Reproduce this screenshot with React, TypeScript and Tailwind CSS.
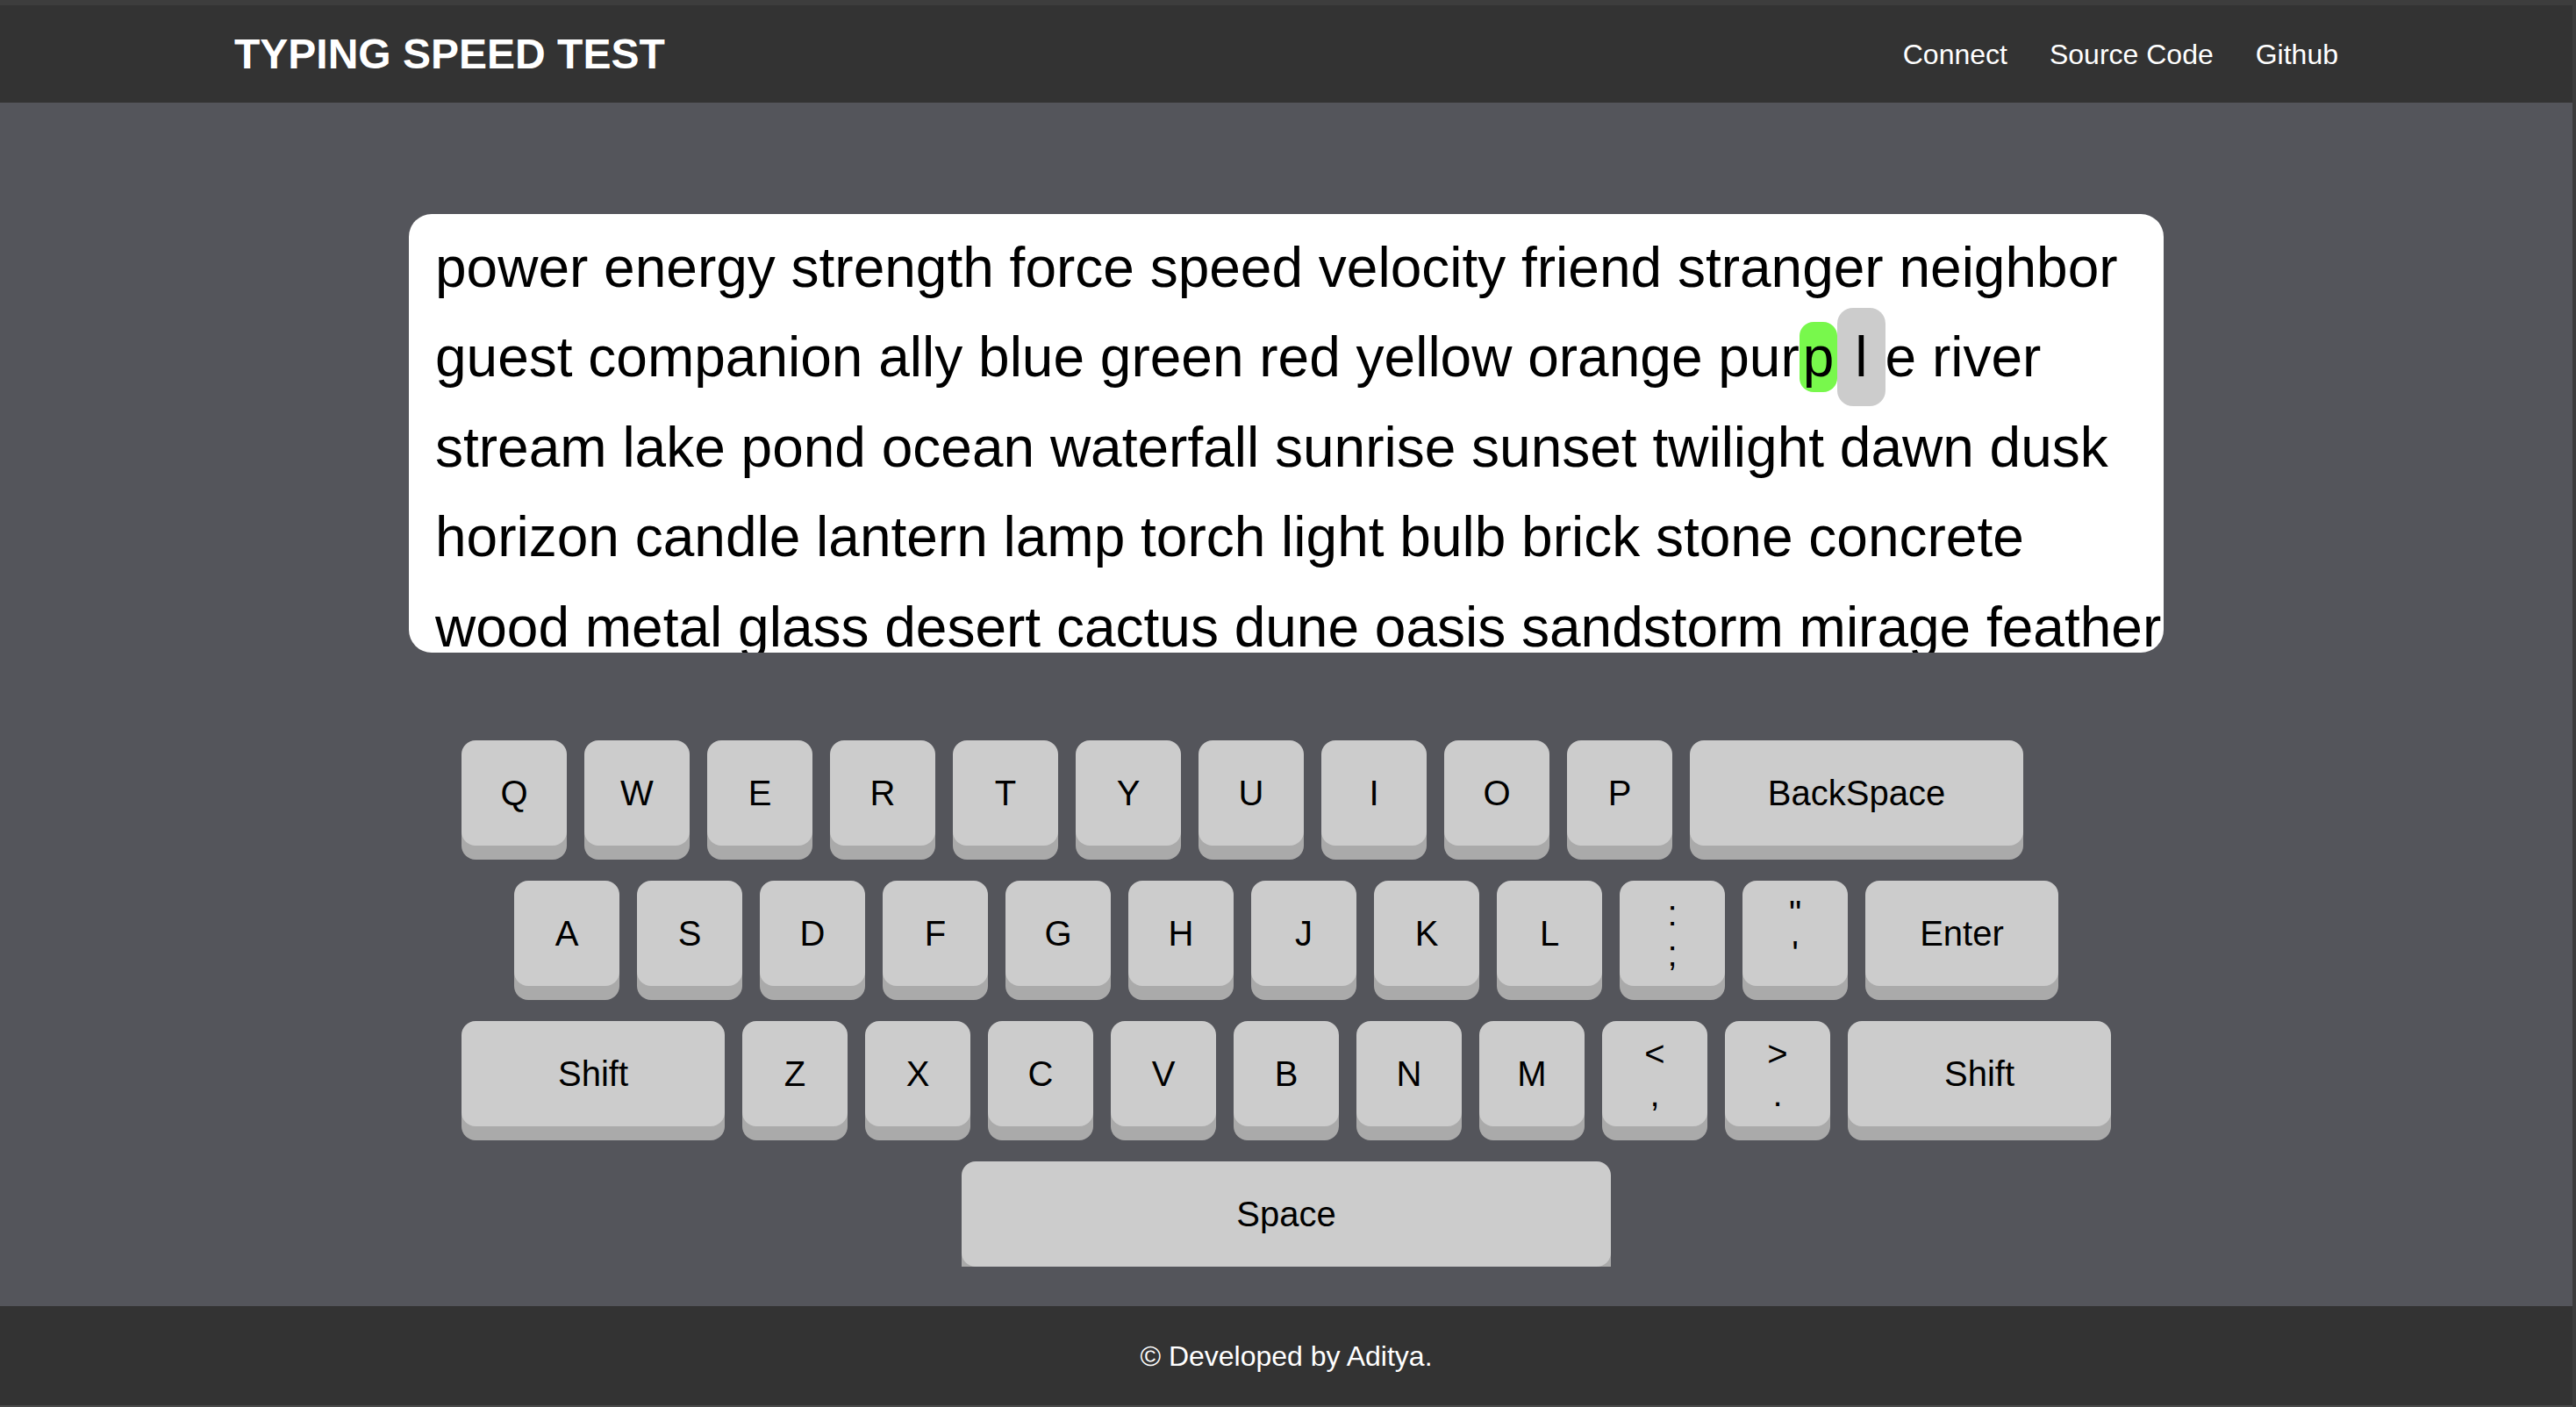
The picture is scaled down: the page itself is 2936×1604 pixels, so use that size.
import React from "react";

const row1 = ["Q", "W", "E", "R", "T", "Y", "U", "I", "O", "P"];
const row2 = ["A", "S", "D", "F", "G", "H", "J", "K", "L"];
const row3 = ["Z", "X", "C", "V", "B", "N", "M"];

const keyBase =
  "h-[120px] shrink-0 rounded-[16px] bg-[#cccccc] shadow-[0_16px_0_#aaaaaa] flex items-center justify-center text-[40px] text-black";

function Key({ label, w = "w-[120px]" }: { label: string; w?: string }) {
  return <div className={`${keyBase} ${w}`}>{label}</div>;
}

function DualKey({ top, bottom }: { top: string; bottom: string }) {
  return (
    <div className={`${keyBase} w-[120px] flex-col leading-[46px]`}>
      <span>{top}</span>
      <span>{bottom}</span>
    </div>
  );
}

export default function App() {
  return (
    <div className="flex min-h-screen w-full bg-[#3c3c3c] font-['Liberation_Sans',Arial,sans-serif]">
      <div className="flex w-[2932px] flex-col">
        <div className="h-[6px] bg-[#3d3d3d]" />
        <header className="flex h-[111px] items-center justify-between bg-[#333333] px-[267px] text-white">
          <h1 className="text-[48px] font-bold leading-none">TYPING SPEED TEST</h1>
          <nav className="flex items-center gap-[48px] text-[32px] leading-none">
            <a>Connect</a>
            <a>Source Code</a>
            <a>Github</a>
          </nav>
        </header>

        <main className="flex flex-col items-center bg-[#54555b] pt-[127px] pb-[45px]">
          <div className="h-[500px] w-[2000px] overflow-hidden rounded-[26px] bg-white pt-[10px] pl-[30px] text-[64px] leading-[102.4px] text-black">
            <div className="whitespace-nowrap">power energy strength force speed velocity friend stranger neighbor</div>
            <div className="whitespace-nowrap">
              guest companion ally blue green red yellow orange pur
              <span className="inline-block h-[80px] rounded-[16px] bg-[#78f84c] px-[4px] align-baseline leading-[80px]">p</span>
              <span className="-my-[6px] inline-block h-[112px] rounded-[18px] bg-[#cccccc] px-[20px] align-baseline leading-[112px]">l</span>
              e river
            </div>
            <div className="whitespace-nowrap">stream lake pond ocean waterfall sunrise sunset twilight dawn dusk</div>
            <div className="whitespace-nowrap">horizon candle lantern lamp torch light bulb brick stone concrete</div>
            <div className="whitespace-nowrap">wood metal glass desert cactus dune oasis sandstorm mirage feather</div>
          </div>

          <div className="mt-[100px] flex h-[600px] w-[1880px] flex-col gap-[40px] overflow-hidden">
            <div className="flex gap-[20px]">
              {row1.map((k) => (
                <Key key={k} label={k} />
              ))}
              <Key label="BackSpace" w="w-[380px]" />
            </div>
            <div className="flex gap-[20px] pl-[60px]">
              {row2.map((k) => (
                <Key key={k} label={k} />
              ))}
              <DualKey top=":" bottom=";" />
              <DualKey top={'"'} bottom="'" />
              <Key label="Enter" w="w-[220px]" />
            </div>
            <div className="flex gap-[20px]">
              <Key label="Shift" w="w-[300px]" />
              {row3.map((k) => (
                <Key key={k} label={k} />
              ))}
              <DualKey top="<" bottom="," />
              <DualKey top=">" bottom="." />
              <Key label="Shift" w="w-[300px]" />
            </div>
            <div className="flex justify-center">
              <Key label="Space" w="w-[740px]" />
            </div>
          </div>
        </main>

        <footer className="flex h-[113px] items-center justify-center bg-[#333333] text-[32px] text-white">
          © Developed by Aditya.
        </footer>
        <div className="h-[2px] bg-[#4a4a4a]" />
      </div>
    </div>
  );
}
